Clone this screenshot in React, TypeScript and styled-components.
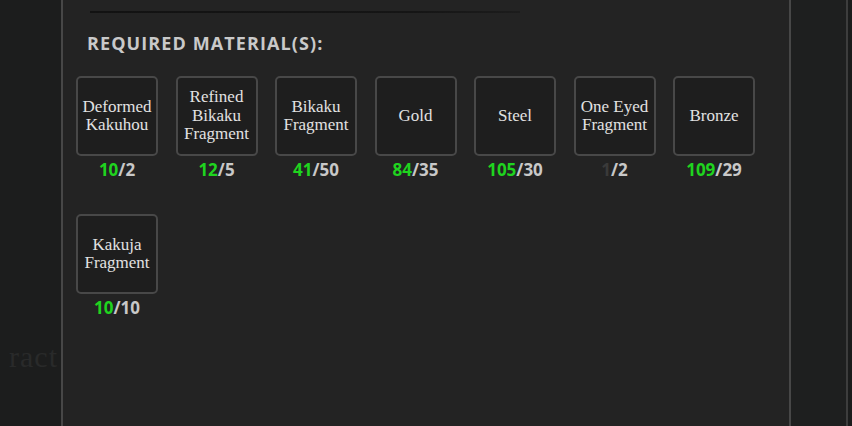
import styled, {createGlobalStyle} from "styled-components";

type Material = {
    name: string
    have: number
    need: number
    owned: boolean
}

const materials: Material[] = [
    {name: "Deformed Kakuhou", have: 10, need: 2, owned: true},
    {name: "Refined Bikaku Fragment", have: 12, need: 5, owned: true},
    {name: "Bikaku Fragment", have: 41, need: 50, owned: true},
    {name: "Gold", have: 84, need: 35, owned: true},
    {name: "Steel", have: 105, need: 30, owned: true},
    {name: "One Eyed Fragment", have: 1, need: 2, owned: false},
    {name: "Bronze", have: 109, need: 29, owned: true},
    {name: "Kakuja Fragment", have: 10, need: 10, owned: true},
];

const GlobalStyle = createGlobalStyle`
    html, body {
        margin: 0;
        padding: 0;
        background: #1b1c1c;
        overflow: hidden;
    }
    #root {
        width: 852px;
        height: 426px;
    }
`;

function App() {
    return (
        <>
            <GlobalStyle/>
            <StyledScreen>
                <StyledSide>
                    <StyledGhost>ract</StyledGhost>
                </StyledSide>
                <StyledPanel>
                    <StyledDivider/>
                    <StyledTitle>REQUIRED MATERIAL(S):</StyledTitle>
                    <StyledGrid>
                        {materials.map(m => (
                            <StyledItem key={m.name}>
                                <StyledTile>{m.name}</StyledTile>
                                <StyledCount>
                                    <StyledHave $owned={m.owned}>{m.have}</StyledHave>/{m.need}
                                </StyledCount>
                            </StyledItem>
                        ))}
                    </StyledGrid>
                </StyledPanel>
                <StyledRightStrip/>
            </StyledScreen>
        </>
    );
}

export default App;


const StyledScreen = styled.div`
    display: flex;
    width: 852px;
    height: 426px;
    background: #1b1c1c;
`;

const StyledSide = styled.div`
    width: 61px;
    flex-shrink: 0;
    overflow: hidden;
    display: flex;
    justify-content: flex-end;
    align-items: flex-start;
    padding-top: 340px;
    box-sizing: border-box;
    background: #1c1d1d;
`;

const StyledGhost = styled.div`
    font-family: "Liberation Serif", serif;
    font-size: 30px;
    letter-spacing: 1px;
    color: #292a2a;
    white-space: nowrap;
    padding-right: 3px;
`;

const StyledPanel = styled.div`
    flex: 1;
    background: #232323;
    border-left: 2px solid #474747;
    border-right: 2px solid #474747;
    padding: 11px 0 0 13px;
    box-sizing: border-box;
`;

const StyledDivider = styled.div`
    margin-left: 14px;
    width: 430px;
    height: 2px;
    background: linear-gradient(90deg, #121212 0%, #151515 75%, #1c1c1c 100%);
`;

const StyledTitle = styled.h2`
    margin: 19px 0 0 11px;
    font-family: "Open Sans", sans-serif;
    font-weight: 700;
    font-size: 18px;
    letter-spacing: 1.1px;
    line-height: 22px;
    color: #c9c9c9;
`;

const StyledGrid = styled.div`
    display: grid;
    grid-template-columns: repeat(7, 82px);
    column-gap: 17.5px;
    row-gap: 34px;
    margin-top: 22px;
`;

const StyledItem = styled.div`
    display: flex;
    flex-direction: column;
    align-items: center;
`;

const StyledTile = styled.div`
    width: 82px;
    height: 80px;
    box-sizing: border-box;
    border: 2px solid #484848;
    border-radius: 5px;
    background: #1e1e1e;
    display: flex;
    align-items: center;
    justify-content: center;
    text-align: center;
    padding: 0 1px;
    font-family: "Liberation Serif", serif;
    font-size: 17px;
    line-height: 18.5px;
    color: #e2e2e2;
`;

const StyledCount = styled.div`
    margin-top: 4px;
    font-family: "Open Sans", sans-serif;
    font-weight: 700;
    font-size: 17px;
    line-height: 20px;
    color: #c8c8c8;
`;

const StyledHave = styled.span<{ $owned: boolean }>`
    color: ${props => props.$owned ? "#1fd41f" : "#3a3a3a"};
`;

const StyledRightStrip = styled.div`
    width: 55px;
    flex-shrink: 0;
    border-right: 2px solid #3d3d3d;
    margin-right: 4px;
    background: #1e1f1f;
`;
